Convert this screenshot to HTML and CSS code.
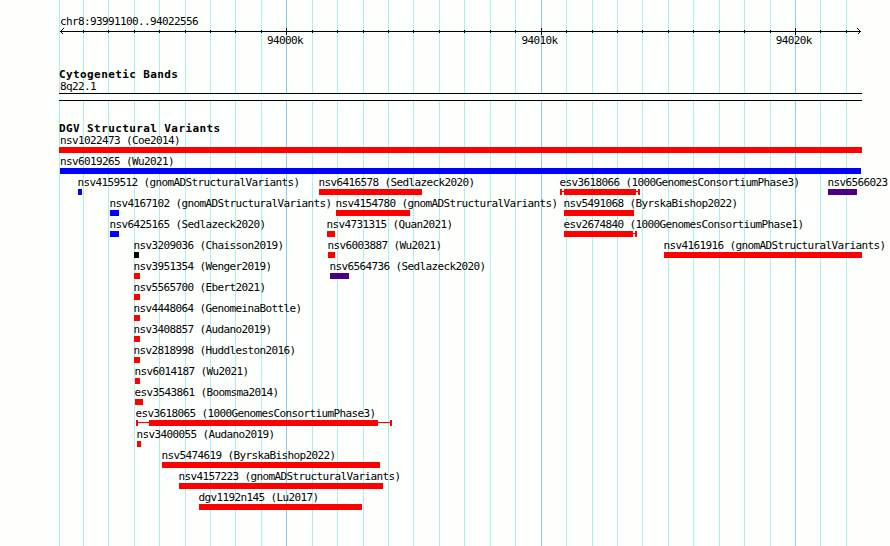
FILE: index.html
```
<!DOCTYPE html>
<html lang="en">
<head>
<meta charset="utf-8">
<title>Genome browser</title>
<link rel="stylesheet" href="styles.css">
</head>
<body>
<main class="browser">
  <svg class="gridlines" width="890" height="546" shape-rendering="crispEdges" aria-hidden="true">
    <path class="minor" d="M59.5 0V546M83.5 0V546M108.5 0V546M134.5 0V546M159.5 0V546M185.5 0V546M210.5 0V546M235.5 0V546M261.5 0V546M312.5 0V546M337.5 0V546M363.5 0V546M388.5 0V546M413.5 0V546M439.5 0V546M464.5 0V546M490.5 0V546M515.5 0V546M566.5 0V546M592.5 0V546M617.5 0V546M642.5 0V546M668.5 0V546M693.5 0V546M719.5 0V546M744.5 0V546M770.5 0V546M820.5 0V546M846.5 0V546"/>
    <path class="major" d="M286.5 0V546M541.5 0V546M795.5 0V546"/>
  </svg>
  <header class="ruler">
    <p class="label">chr8:93991100..94022556</p>
    <svg class="axis" width="803" height="7" shape-rendering="crispEdges" aria-hidden="true">
      <path d="M1 3.5H802M24.5 2V5M49.5 2V5M75.5 2V5M100.5 2V5M126.5 2V5M151.5 2V5M176.5 2V5M202.5 2V5M227.5 0V7M253.5 2V5M278.5 2V5M304.5 2V5M329.5 2V5M354.5 2V5M380.5 2V5M405.5 2V5M431.5 2V5M456.5 2V5M482.5 0V7M507.5 2V5M533.5 2V5M558.5 2V5M583.5 2V5M609.5 2V5M634.5 2V5M660.5 2V5M685.5 2V5M711.5 2V5M736.5 0V7M761.5 2V5M787.5 2V5"/>
      <path d="M4.5 .5L1.5 3.5L4.5 6.5M798.5 .5L801.5 3.5L798.5 6.5"/>
    </svg>
    <div class="ticks"><span class="label">94000k</span><span class="label">94010k</span><span class="label">94020k</span></div>
  </header>
  <section class="bands">
    <h2>Cytogenetic Bands</h2>
    <p class="label">8q22.1</p>
    <div class="band"></div>
  </section>
  <section class="variants">
    <h2>DGV Structural Variants</h2>
    <div class="row"><div class="feature"><span class="label inset">nsv1022473 (Coe2014)</span><i class="bar" style="width:803px"></i></div></div>
    <div class="row"><div class="feature blue" style="margin-left:1px"><span class="label wide">nsv6019265 (Wu2021)</span><i class="bar" style="width:801px"></i></div></div>
    <div class="row">
      <div class="feature blue" style="margin-left:19px"><span class="label">nsv4159512 (gnomADStructuralVariants)</span><i class="bar" style="width:4px"></i></div>
      <div class="feature" style="margin-left:260px"><span class="label">nsv6416578 (Sedlazeck2020)</span><i class="bar" style="width:103px"></i></div>
      <div class="feature" style="margin-left:501px"><span class="label">esv3618066 (1000GenomesConsortiumPhase3)</span><div class="range"><i class="cap"></i><i class="thin" style="width:2px"></i><i class="bar" style="width:72px"></i><i class="thin" style="width:2px"></i><i class="cap"></i></div></div>
      <div class="feature indigo" style="margin-left:769px"><span class="label">nsv6566023</span><i class="bar" style="width:29px"></i></div>
    </div>
    <div class="row">
      <div class="feature blue" style="margin-left:51px"><span class="label">nsv4167102 (gnomADStructuralVariants)</span><i class="bar" style="width:9px"></i></div>
      <div class="feature" style="margin-left:277px"><span class="label">nsv4154780 (gnomADStructuralVariants)</span><i class="bar" style="width:74px"></i></div>
      <div class="feature" style="margin-left:505px"><span class="label">nsv5491068 (ByrskaBishop2022)</span><i class="bar" style="width:70px"></i></div>
    </div>
    <div class="row">
      <div class="feature blue" style="margin-left:51px"><span class="label">nsv6425165 (Sedlazeck2020)</span><i class="bar" style="width:9px"></i></div>
      <div class="feature" style="margin-left:268px"><span class="label">nsv4731315 (Quan2021)</span><i class="bar" style="width:8px"></i></div>
      <div class="feature" style="margin-left:505px"><span class="label">esv2674840 (1000GenomesConsortiumPhase1)</span><div class="range"><i class="bar" style="width:69px"></i><i class="thin" style="width:2px"></i><i class="cap"></i></div></div>
    </div>
    <div class="row">
      <div class="feature black" style="margin-left:75px"><span class="label">nsv3209036 (Chaisson2019)</span><i class="bar" style="width:5px"></i></div>
      <div class="feature" style="margin-left:269px"><span class="label">nsv6003887 (Wu2021)</span><i class="bar" style="width:7px"></i></div>
      <div class="feature" style="margin-left:605px"><span class="label">nsv4161916 (gnomADStructuralVariants)</span><i class="bar" style="width:198px"></i></div>
    </div>
    <div class="row">
      <div class="feature" style="margin-left:75px"><span class="label">nsv3951354 (Wenger2019)</span><i class="bar" style="width:6px"></i></div>
      <div class="feature indigo" style="margin-left:271px"><span class="label">nsv6564736 (Sedlazeck2020)</span><i class="bar" style="width:19px"></i></div>
    </div>
    <div class="row"><div class="feature" style="margin-left:75px"><span class="label">nsv5565700 (Ebert2021)</span><i class="bar" style="width:6px"></i></div></div>
    <div class="row"><div class="feature" style="margin-left:75px"><span class="label">nsv4448064 (GenomeinaBottle)</span><i class="bar" style="width:6px"></i></div></div>
    <div class="row"><div class="feature" style="margin-left:75px"><span class="label">nsv3408857 (Audano2019)</span><i class="bar" style="width:6px"></i></div></div>
    <div class="row"><div class="feature" style="margin-left:75px"><span class="label">nsv2818998 (Huddleston2016)</span><i class="bar" style="width:6px"></i></div></div>
    <div class="row"><div class="feature" style="margin-left:76px"><span class="label">nsv6014187 (Wu2021)</span><i class="bar" style="width:5px"></i></div></div>
    <div class="row"><div class="feature" style="margin-left:76px"><span class="label">esv3543861 (Boomsma2014)</span><i class="bar" style="width:8px"></i></div></div>
    <div class="row"><div class="feature" style="margin-left:77px"><span class="label">esv3618065 (1000GenomesConsortiumPhase3)</span><div class="range"><i class="cap"></i><i class="thin" style="width:11px"></i><i class="bar" style="width:229px"></i><i class="thin" style="width:12px"></i><i class="cap"></i></div></div></div>
    <div class="row"><div class="feature" style="margin-left:78px"><span class="label">nsv3400055 (Audano2019)</span><i class="bar" style="width:4px"></i></div></div>
    <div class="row"><div class="feature" style="margin-left:103px"><span class="label">nsv5474619 (ByrskaBishop2022)</span><i class="bar" style="width:218px"></i></div></div>
    <div class="row"><div class="feature" style="margin-left:120px"><span class="label">nsv4157223 (gnomADStructuralVariants)</span><i class="bar" style="width:204px"></i></div></div>
    <div class="row"><div class="feature" style="margin-left:140px"><span class="label">dgv1192n145 (Lu2017)</span><i class="bar" style="width:163px"></i></div></div>
  </section>
</main>
</body>
</html>
```
FILE: styles.css
```
* { box-sizing: border-box; }
body { margin: 0; background: #fdfffc; color: #000; }
.browser {
  position: relative;
  width: 890px;
  height: 546px;
  padding: 16px 0 0 59px;
  overflow: hidden;
  font: 11px/12px "DejaVu Sans Mono", "Liberation Mono", monospace;
}
.gridlines { position: absolute; inset: 0; z-index: -1; }
.gridlines path { fill: none; stroke-width: 1; }
.minor { stroke: #afeeee; }
.major { stroke: #87ceeb; }
p, h2 { margin: 0; }
h2 { font-size: 11px; line-height: 12px; font-weight: bold; letter-spacing: .4px; }
.label { display: block; height: 12px; letter-spacing: -.622px; white-space: nowrap; }
.ruler p, .bands p { padding-left: 1px; }
.ruler { width: 803px; height: 51px; }
.axis { display: block; }
.axis path { fill: none; stroke: #000; stroke-width: 1; }
.ticks { display: flex; gap: 218.4px; padding-left: 208px; }
.ticks .label { width: 36px; }
.bands { width: 803px; height: 54px; }
.bands h2, .variants h2 { height: 14px; padding-top: 2px; }
.band { height: 8px; border: solid #000; border-width: 1px 0; background: #fdfffc; }
.row { display: grid; height: 21px; justify-items: start; }
.feature { --color: #f00; grid-area: 1 / 1; }
.feature .label { margin-left: -.5px; }
.feature .inset { margin-left: 1px; }
.feature .wide { margin-left: 0; }
.blue { --color: #00f; }
.indigo { --color: #4b0082; }
.black { --color: #000; }
.bar { display: block; height: 6px; background: var(--color); }
.range { display: flex; align-items: flex-start; height: 6px; }
.cap { width: 2px; height: 6px; background: var(--color); }
.thin { height: 1px; margin-top: 2px; background: var(--color); }
```
